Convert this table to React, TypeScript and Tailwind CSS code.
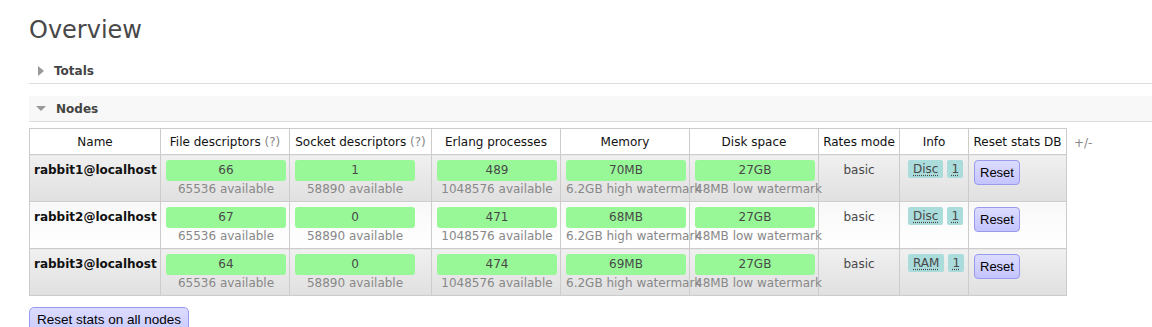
import React from "react";

type Node = {
  name: string;
  fd: string;
  sockets: string;
  procs: string;
  mem: string;
  disk: string;
  store: string;
};

const nodes: Node[] = [
  { name: "rabbit1@localhost", fd: "66", sockets: "1", procs: "489", mem: "70MB", disk: "27GB", store: "Disc" },
  { name: "rabbit2@localhost", fd: "67", sockets: "0", procs: "471", mem: "68MB", disk: "27GB", store: "Disc" },
  { name: "rabbit3@localhost", fd: "64", sockets: "0", procs: "474", mem: "69MB", disk: "27GB", store: "RAM" },
];

// green bar with a grey caption underneath
function Meter({ value, sub }: { value: string; sub: string }) {
  return (
    <div className="w-[120px]">
      <div className="h-[21px] rounded-[3px] bg-[#98f898] text-center leading-[21px] text-[#484848]">{value}</div>
      <div className="whitespace-nowrap text-center leading-[16px] text-[#888]">{sub}</div>
    </div>
  );
}

function Help() {
  return <span className="text-[#888]">(?)</span>;
}

export default function App() {
  return (
    <div className="min-h-screen bg-white pl-[29px] text-[12px] text-[#484848] [font-family:'DejaVu_Sans',Verdana,sans-serif]">
      <h1 className="pt-[15px] text-[24px] leading-[30px] text-[#484848]">Overview</h1>

      {/* Totals (collapsed) */}
      <div className="mt-[13px] flex h-[26px] items-center border-b border-[#ddd] pl-[9px] font-bold text-[#444]">
        <span className="mr-[10px] h-0 w-0 border-y-[5px] border-l-[6px] border-y-transparent border-l-[#999]" />
        Totals
      </div>

      {/* Nodes (expanded) */}
      <div className="mt-[12px] flex h-[26px] items-center border-b border-[#ddd] bg-[#f8f8f8] pl-[7px] font-bold text-[#444]">
        <span className="mr-[10px] h-0 w-0 border-x-[5px] border-t-[5px] border-x-transparent border-t-[#999]" />
        Nodes
      </div>

      <div className="mt-[6px] flex items-start">
        <table className="w-[1038px] table-fixed border-collapse">
          <colgroup>
            <col className="w-[131px]" />
            <col className="w-[129px]" />
            <col className="w-[142px]" />
            <col className="w-[129px]" />
            <col className="w-[129px]" />
            <col className="w-[129px]" />
            <col className="w-[81px]" />
            <col className="w-[69px]" />
            <col className="w-[98px]" />
          </colgroup>
          <thead>
            <tr className="h-[26px] bg-white text-[#111]">
              <th className="border border-[#ccc] font-normal">Name</th>
              <th className="border border-[#ccc] font-normal">File descriptors <Help /></th>
              <th className="border border-[#ccc] font-normal">Socket descriptors <Help /></th>
              <th className="border border-[#ccc] font-normal">Erlang processes</th>
              <th className="border border-[#ccc] font-normal">Memory</th>
              <th className="border border-[#ccc] font-normal">Disk space</th>
              <th className="border border-[#ccc] font-normal">Rates mode</th>
              <th className="border border-[#ccc] font-normal">Info</th>
              <th className="whitespace-nowrap border border-[#ccc] font-normal">Reset stats DB</th>
            </tr>
          </thead>
          <tbody>
            {nodes.map((n, i) => {
              const bg = i % 2 === 0 ? "bg-linear-to-b from-[#f0f0f0] to-[#e0e0e0]" : "bg-linear-to-b from-[#f8f8f8] to-white";
              const td = `h-[47px] border border-[#ccc] align-top pt-[5px] ${bg}`;
              return (
                <tr key={n.name}>
                  <td className={`${td} whitespace-nowrap pl-[4px] pt-[6px] font-bold text-[#111]`}>{n.name}</td>
                  <td className={`${td} pl-[5px]`}><Meter value={n.fd} sub="65536 available" /></td>
                  <td className={`${td} pl-[5px]`}><Meter value={n.sockets} sub="58890 available" /></td>
                  <td className={`${td} pl-[5px]`}><Meter value={n.procs} sub="1048576 available" /></td>
                  <td className={`${td} pl-[5px]`}><Meter value={n.mem} sub="6.2GB high watermark" /></td>
                  <td className={`${td} pl-[5px]`}><Meter value={n.disk} sub="48MB low watermark" /></td>
                  <td className={`${td} pt-[6px] text-center`}>basic</td>
                  <td className={`${td} pl-[8px]`}>
                    <div className="flex gap-[4px]">
                      <span className="h-[18px] rounded-[2px] bg-[#aadcdc] px-[5px] leading-[18px]">
                        <span className="underline decoration-dotted underline-offset-2">{n.store}</span>
                      </span>
                      <span className="h-[18px] rounded-[2px] bg-[#aadcdc] px-[4px] leading-[18px]">
                        <span className="underline decoration-dotted underline-offset-2">1</span>
                      </span>
                    </div>
                  </td>
                  <td className={`${td} pl-[5px] pt-[5px]`}>
                    <button className="h-[25px] rounded-[4px] border border-[#9999ee] bg-linear-to-b from-[#dcdcff] to-[#c4c4ff] px-[5px] text-[13px] text-black [font-family:'Liberation_Sans',Arial,sans-serif]">
                      Reset
                    </button>
                  </td>
                </tr>
              );
            })}
          </tbody>
        </table>
        <span className="ml-[7px] mt-[6px] text-[#888]">+/-</span>
      </div>

      <button className="mt-[11px] h-[30px] rounded-[5px] border border-[#9999ee] bg-linear-to-b from-[#dcdcff] to-[#c8c8ff] px-[7px] pb-[3px] text-[13.5px] text-black [font-family:'Liberation_Sans',Arial,sans-serif]">
        Reset stats on all nodes
      </button>
    </div>
  );
}
